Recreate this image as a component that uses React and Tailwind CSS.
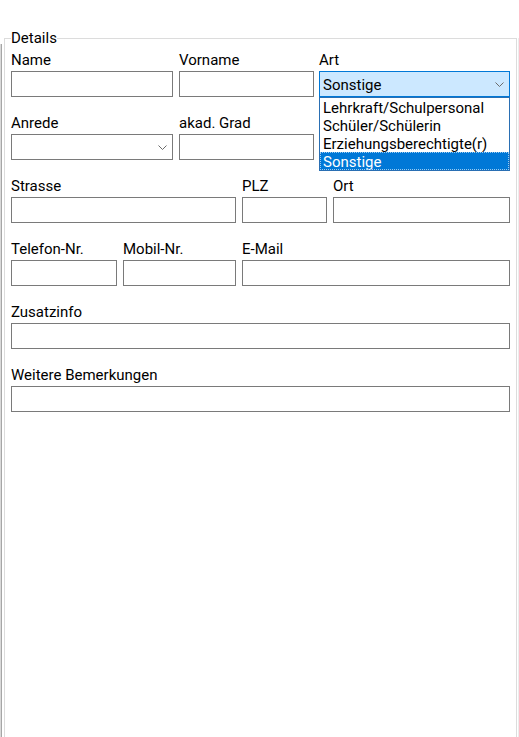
import { useState } from 'react';

const artOptions = ['Lehrkraft/Schulpersonal', 'Schüler/Schülerin', 'Erziehungsberechtigte(r)', 'Sonstige'];

function Chevron() {
    return (
        <svg width="9" height="5" viewBox="0 0 9 5" className="shrink-0 self-center">
            <polyline points="0.5,0.5 4.5,4.5 8.5,0.5" fill="none" stroke="#6b6b6b" strokeWidth="1" />
        </svg>
    );
}

function Field({ label, className, children }) {
    return (
        <div className={`flex flex-col ${className}`}>
            <label className="mb-px h-[21px] whitespace-nowrap pt-px leading-[20px]">{label}</label>
            {children || <div className="h-[26px] border border-[#7a7a7a] bg-white" />}
        </div>
    );
}

function ArtSelect() {
    const [selected] = useState('Sonstige');

    return (
        <div className="relative">
            <div className="flex h-[26px] justify-between border border-[#0078d7] bg-[#cce8ff] pl-[3px] pr-[5px]">
                <span className="pt-[2px] leading-[22px]">{selected}</span>
                <Chevron />
            </div>
            <ul className="absolute left-0 top-full z-10 w-full border border-[#2a6fb3] bg-white">
                {artOptions.map((opt) => (
                    <li
                        key={opt}
                        className={`h-[18px] whitespace-nowrap pl-[3px] pt-[2px] leading-[16px] ${opt === selected ? 'bg-[#0078d7] text-white outline-1 -outline-offset-1 outline-dotted outline-[#9ccbf0]' : ''}`}
                    >
                        {opt}
                    </li>
                ))}
            </ul>
        </div>
    );
}

export default function App() {
    return (
        <div className="flex h-[737px] w-[519px] overflow-hidden bg-white font-['Roboto',sans-serif] text-[15px] text-black">
            <div className="mt-[44px] w-[4px] shrink-0 border-l border-[#d9d9d9]">
                <div className="h-full w-px bg-[#a6a6a6]" />
            </div>

            <fieldset className="mt-[30px] h-[760px] w-[513px] shrink-0 border border-[#dcdcdc] px-[6px] pt-[3px]">
                <legend className="leading-[16px]">Details</legend>

                <div className="flex flex-col gap-[15px]">
                    <div className="flex">
                        <Field label="Name" className="w-[162px]" />
                        <Field label="Vorname" className="ml-[6px] w-[135px]" />
                        <Field label="Art" className="ml-[5px] w-[191px]">
                            <ArtSelect />
                        </Field>
                    </div>

                    <div className="flex">
                        <Field label="Anrede" className="w-[162px]">
                            <div className="flex h-[26px] justify-end border border-[#7a7a7a] bg-white pr-[5px]">
                                <Chevron />
                            </div>
                        </Field>
                        <Field label="akad. Grad" className="ml-[6px] w-[135px]" />
                    </div>

                    <div className="flex">
                        <Field label="Strasse" className="w-[225px]" />
                        <Field label="PLZ" className="ml-[6px] w-[85px]" />
                        <Field label="Ort" className="ml-[6px] w-[177px]" />
                    </div>

                    <div className="flex">
                        <Field label="Telefon-Nr." className="w-[106px]" />
                        <Field label="Mobil-Nr." className="ml-[6px] w-[113px]" />
                        <Field label="E-Mail" className="ml-[6px] w-[268px]" />
                    </div>

                    <Field label="Zusatzinfo" className="w-full" />
                    <Field label="Weitere Bemerkungen" className="w-full" />
                </div>
            </fieldset>

            <div className="mt-[38px] w-[2px] shrink-0 border-r border-[#ececec]" />
        </div>
    );
}
